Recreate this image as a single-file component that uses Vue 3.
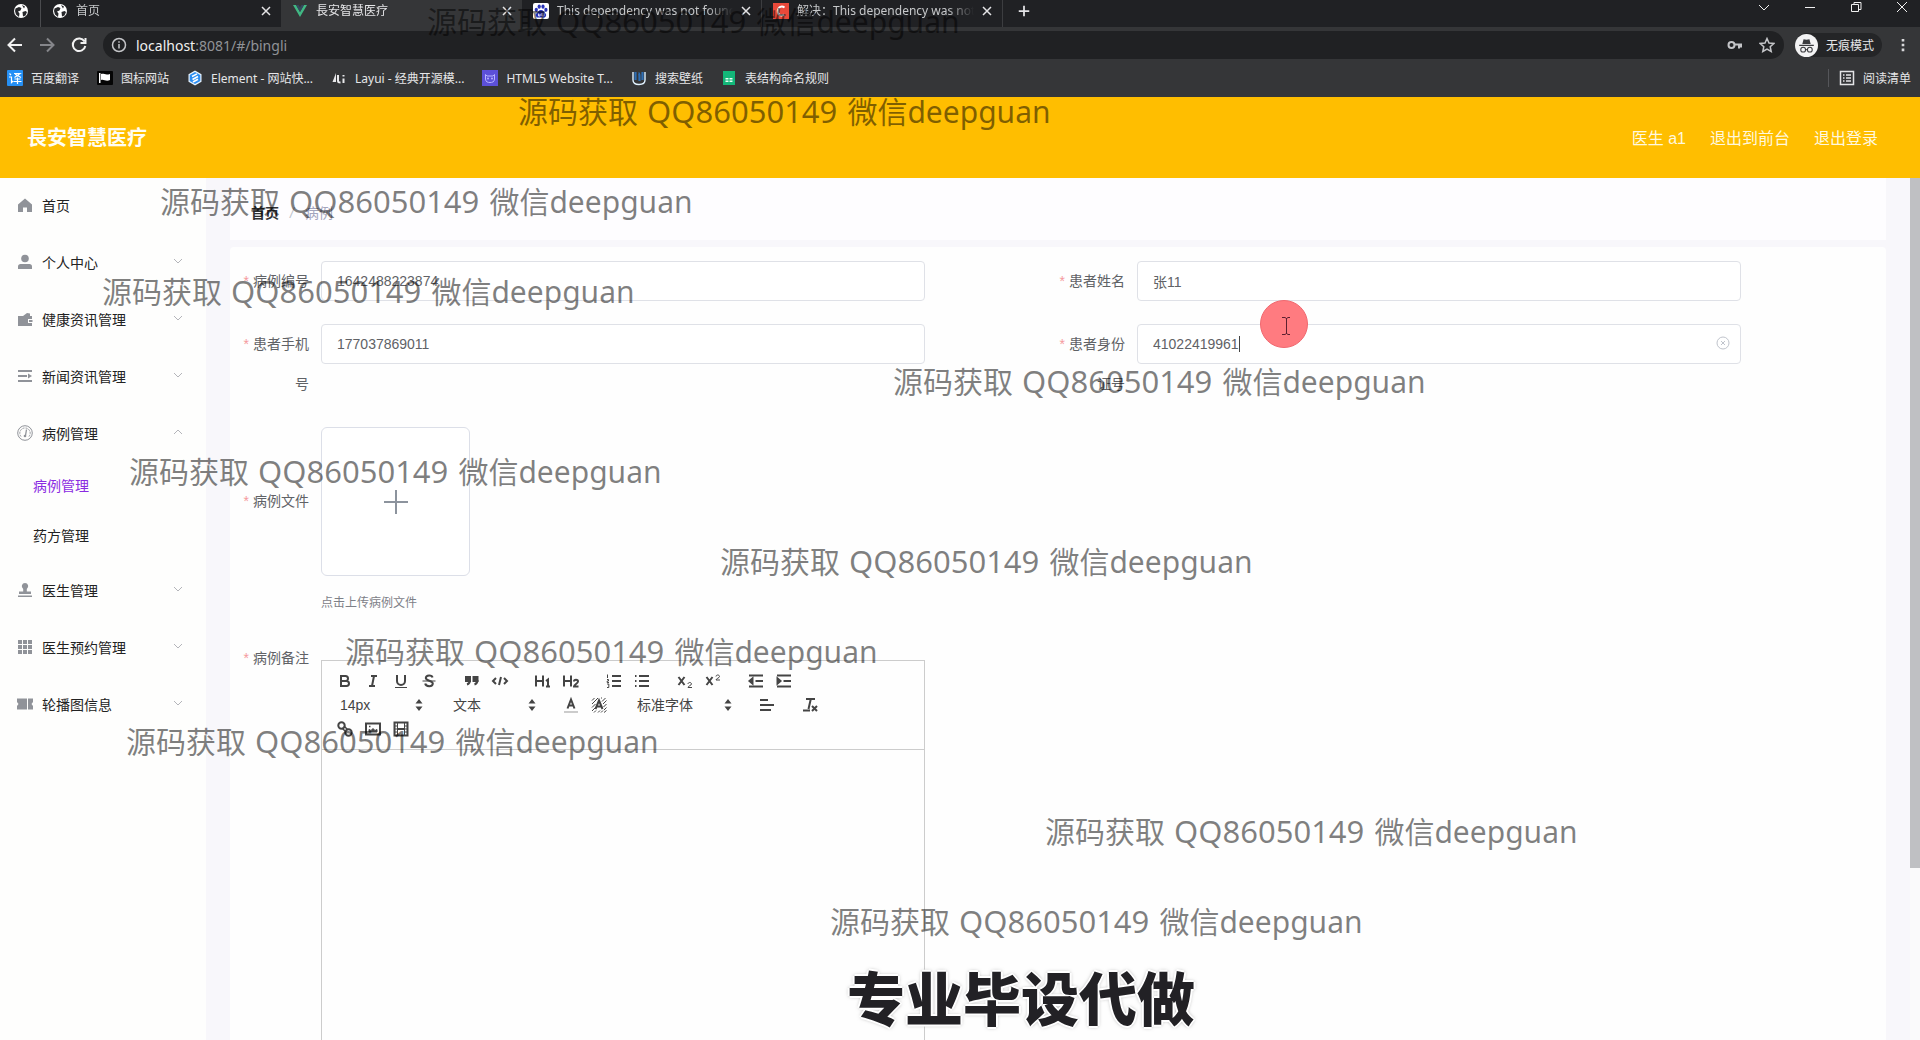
<script setup>
import { ref } from 'vue'

const tabs = [
  { title: '首页', icon: 'globe', width: 240 },
  { title: '長安智慧医疗', icon: 'vue', width: 241, active: true },
  { title: 'This dependency was not found', icon: 'paw', width: 240, line: true },
  { title: '解决：This dependency was not', icon: 'csdn', width: 241, line: true }
]

const bookmarks = [
  { title: '百度翻译', icon: 'translate' },
  { title: '图标网站', icon: 'flag' },
  { title: 'Element - 网站快...', icon: 'element' },
  { title: 'Layui - 经典开源模...', icon: 'layui' },
  { title: 'HTML5 Website T...', icon: 'html5' },
  { title: '搜索壁纸', icon: 'wall' },
  { title: '表结构命名规则', icon: 'sheet' }
]

const menu = [
  { title: '首页', icon: 'home' },
  { title: '个人中心', icon: 'user', arrow: true },
  { title: '健康资讯管理', icon: 'wallet', arrow: true },
  { title: '新闻资讯管理', icon: 'list', arrow: true },
  { title: '病例管理', icon: 'gauge', arrow: true, open: true, children: ['病例管理', '药方管理'] },
  { title: '医生管理', icon: 'stamp', arrow: true },
  { title: '医生预约管理', icon: 'grid', arrow: true },
  { title: '轮播图信息', icon: 'ticket', arrow: true }
]

const form = ref({
  code: '1642488223874',
  name: '张11',
  phone: '177037869011',
  idCard: '41022419961'
})

const inlineTools = [
  ['bold', 'italic', 'underline', 'strike'],
  ['quote', 'code'],
  ['h1', 'h2'],
  ['ol', 'ul'],
  ['sub', 'sup'],
  ['outdent', 'indent']
]

const marks = [
  { x: 427, y: 21 },
  { x: 518, y: 111 },
  { x: 160, y: 201 },
  { x: 102, y: 291 },
  { x: 893, y: 381 },
  { x: 129, y: 471 },
  { x: 720, y: 561 },
  { x: 345, y: 651 },
  { x: 126, y: 741 },
  { x: 1045, y: 831 },
  { x: 830, y: 921 }
]

const icons = {
  globe: '<circle cx="8" cy="8" r="7" fill="#fff"/><path d="M2.500 5.500 6 4l2.500 1-1 2.500L5 8.500l1.500 2L6 14 3 11.500 2 8zM9.500 9l3-1 1.500 1-1.500 3.500-2.500 1zM9 2l3 1.500-1 2z" fill="#26272a"/>',
  vue: '<path d="M1 2h3l4 7 4-7h3L8 14z" fill="#41b883"/><path d="M4 2h2.500L8 4.500 9.500 2H12L8 9z" fill="#35495e"/>',
  paw: '<rect width="16" height="16" rx="2" fill="#fff"/><g fill="#2932b8"><ellipse cx="3.300" cy="6.800" rx="1.600" ry="2.100"/><ellipse cx="6.200" cy="3.600" rx="1.600" ry="2.200"/><ellipse cx="10" cy="3.600" rx="1.600" ry="2.200"/><ellipse cx="12.900" cy="6.800" rx="1.600" ry="2.100"/><path d="M8 7c2.400 0 2.700 2 4.300 3.200 1.700 1.500.7 4.300-1.300 4.300H5c-2 0-3-2.800-1.300-4.300C5.300 9 5.600 7 8 7z"/></g><path d="M5.500 10.500v2.500h1.500v-2M9 10v3h2v-3" fill="none" stroke="#fff" stroke-width=".8"/>',
  csdn: '<rect width="16" height="16" fill="#e8493a"/><path d="M11.500 4.500C9 2.500 5 3.500 4.800 8c-.1 4.600 3.600 5.400 6.400 3.600" fill="none" stroke="#fff" stroke-width="2"/>',
  translate: '<rect width="16" height="16" rx="1" fill="#2590f5"/><path d="M2.500 3.500 4 5M2 7h2.500v5.500L6 11M7 3.500h6L7.500 7.500M8 4l6 3.500M7.500 9h6M6.500 11.500h8M10.500 7.500V14" fill="none" stroke="#fff" stroke-width="1.200"/>',
  flag: '<rect y="1" width="16" height="14" rx="1" fill="#050505"/><path d="M2 3h1.500v10H2zM4 4c3-1 4 1.500 9 0v6c-4 2-6-1-9 0z" fill="#fff"/>',
  element: '<path d="m8 .5 6.500 3.700v7.600L8 15.500l-6.500-3.700V4.200z" fill="#e8f4ff"/><path d="m8 2 5.300 3v6L8 14l-5.300-3V5z" fill="#2b8ef3"/><path d="m5 6.500 5-2.600M5.500 9.500 11 6.500M6 12l5-2.800" stroke="#fff" stroke-width="1.600"/>',
  layui: '<path d="M5 3v9H1.500z" fill="#e8e8ea"/><path d="M7 5v6c0 1.500 1 1.500 2.500 1.500M12.500 8.500V13M12.500 5v1.500" fill="none" stroke="#e8e8ea" stroke-width="2"/>',
  html5: '<rect width="16" height="16" fill="#5c50d8"/><path d="M3.500 4.500 5 6h6l1.500-1.500V9c0 3-2.500 3.500-4.500 3.500S3.500 12 3.500 9z" fill="none" stroke="#b7b4ff"/><circle cx="6" cy="8.500" r="1" fill="#b7b4ff"/><circle cx="10" cy="8.500" r="1" fill="#b7b4ff"/>',
  wall: '<path d="M2 2v8c0 3 2 4.500 6 4.500s6-1.500 6-4.500V2" fill="none" stroke="#dff1ff" stroke-width="1.400"/><path d="M4.500 2v8M7.500 3c1 0 1 2 1 8M11.500 2v8" fill="none" stroke="#2d6eb4" stroke-width="2.200"/>',
  sheet: '<path d="M2 1h12v14H2z" fill="#13b779"/><path d="M4.500 8h3v1.500h-3zM8.500 8h3v1.500h-3zM4.500 10.500h3V12h-3zM8.500 10.500h3V12h-3z" fill="#e9fff6"/>',
  home: '<path d="M8 1.500 1 7.500V15h5v-4.500h4V15h5V7.500z" fill="#909399"/>',
  user: '<circle cx="8" cy="4.500" r="3.800" fill="#909399"/><path d="M1 15v-2.500C1 11 2 10 3.500 10h9c1.500 0 2.500 1 2.500 2.500V15z" fill="#909399"/>',
  wallet: '<path d="M1 5h5l4-3 3 .5V5h2v3h-4v4h4v3H1z" fill="#909399"/><path d="M12 9h3.500v2H12z" fill="#909399"/>',
  list: '<path d="M1 3h14M1 8h9M1 13h14" stroke="#909399" stroke-width="1.800"/><path d="m11 5.500 4 2.500-4 2.500z" fill="#909399"/>',
  gauge: '<circle cx="8" cy="8" r="7.300" fill="none" stroke="#909399"/><path d="M4 11.500A5.200 5.200 0 1 1 12 11.500" fill="none" stroke="#909399" stroke-dasharray="2 1"/><path d="m9.500 4.500-1 6" stroke="#909399" stroke-width="1.300"/><circle cx="8" cy="11" r="1.300" fill="#909399"/>',
  stamp: '<path d="M8 1a3.300 3.300 0 0 1 1.800 6v2.500H14V12H2V9.500h4.200V7A3.300 3.300 0 0 1 8 1zM1 13.500h14V15H1z" fill="#909399"/>',
  grid: '<path d="M1 1h4v4H1zM6 1h4v4H6zM11 1h4v4h-4zM1 6h4v4H1zM6 6h4v4H6zM11 6h4v4h-4zM1 11h4v4H1zM6 11h4v4H6zM11 11h4v4h-4z" fill="#909399"/>',
  ticket: '<path d="M0 2.500h10v11H0V10l1.500-2L0 6zM11 2.500h5V6l-1.500 2L16 10v3.500h-5z" fill="#909399"/>'
}

/* 18 x 18 editor glyphs */
const tools = {
  bold: '<path d="M5 4h4.500a2.500 2.500 0 0 1 0 5H5zM5 9h5.500a2.500 2.500 0 0 1 0 5H5z"/>',
  italic: '<path d="M7 4h6M5 14h6M8 14l2-10"/>',
  underline: '<path d="M5 3v6a4 4 0 0 0 8 0V3"/><path d="M3 15.500h12" stroke-width="1"/>',
  strike: '<path d="M12.500 5.500C12 3 6 2.800 5.800 6c0 3 7 2.500 7 5.500 0 3.500-7 3.500-7.600 0"/><path d="M2.500 9h13" stroke-width="1"/>',
  quote: '<path d="M3 5h4v4H3zM10.500 5h4v4h-4z" fill="#444"/><path d="M7 8c0 3-1.500 4-3 4.500M14.500 8c0 3-1.500 4-3 4.500"/>',
  code: '<path d="m5 6-3 3 3 3M13 6l3 3-3 3M10 5l-2 8"/>',
  h1: '<path d="M2 3.500v11M9 3.500v11M2 9h7M12 9l2-1.500v7M12 14.500h4"/>',
  h2: '<path d="M2 3.500v11M9 3.500v11M2 9h7M12 9.500c0-2.500 4-2.500 4 0 0 2-4 3-4 5h4.500"/>',
  ol: '<path d="M7 4h9M7 9h9M7 14h9"/><path d="M2.500 2.500v3.500M2 7.500h1.500v1.500H2.200V10.500H4M2 12h1.800v3.500H2" stroke-width="1"/>',
  ul: '<path d="M6 4h10M6 9h10M6 14h10M2 4h1.500M2 9h1.500M2 14h1.500"/>',
  sub: '<path d="m2.500 5 6 8M8.500 5l-6 8"/><path d="M12 12c0-2 3.500-2 3.500 0 0 1.300-3.500 2-3.500 3.500h4" stroke-width="1"/>',
  sup: '<path d="m2.500 5 6 8M8.500 5l-6 8"/><path d="M12 4.500c0-2 3.500-2 3.500 0C15.500 6 12 6.500 12 8h4" stroke-width="1"/>',
  outdent: '<path d="M2 3.500h14M8.500 9H16M2 14.500h14"/><path d="M5.500 6.500v5L2.500 9z" fill="#444"/>',
  indent: '<path d="M2 3.500h14M8.500 9H16M2 14.500h14"/><path d="M2.500 6.500v5l3-2.500z" fill="#444"/>',
  color: '<path d="M2 16h14" stroke="#999" stroke-width="1"/><path d="m5.500 12.500 3.500-9 3.500 9M7 9.500h4.500"/>',
  background: '<path d="M2 4.500 4.500 2M2 8l6-6M2 11.500 5.500 8M2 15l4-4M4 16.500l2-2M12 2h-1M12 5.500 15.500 2M13 8l3.500-3.500M13.500 11 16.500 8M14 14l2.500-2.500M14 16.500l2.500-2M8 16.500l2-2M11 16.500l2-2" stroke-width="1"/><path d="M5.500 13 9 4.500l3.500 8.500M7 10.500h4"/>',
  align: '<path d="M2 4h8M2 9h14M2 14h11"/>',
  clean: '<path d="M5 3h9M9.800 3 7.500 13M2 14.500h7M11 10l5 5M16 10l-5 5"/>',
  link: '<circle cx="5.500" cy="5.500" r="3.200"/><circle cx="12.500" cy="12.500" r="3.200"/><path d="m6 8 4 4M8 6l4 4" stroke-width="1.500"/>',
  image: '<path d="M2 3.500h14v11H2z"/><path d="M5 12V9.500l2 1 2-2 2 2 2-1V12z" fill="#444" stroke-width="1"/><path d="M5 6.500h1.500" stroke-width="1.500"/>',
  video: '<path d="M2.500 2.500h13v13h-13zM5.500 9h7"/><path d="M5.500 3v12M12.500 3v12M3 6h2.500M3 9h2.500M3 12h2.500M12.500 6H15M12.500 9H15M12.500 12H15" stroke-width="1"/>'
}
</script>

<template>
  <div class="screen">
    <div class="browser">
      <div class="tabstrip">
        <div class="pinned"><svg class="ic" viewBox="0 0 16 16" v-html="icons.globe"></svg></div>
        <div
          v-for="t in tabs"
          :key="t.title"
          class="tab"
          :class="{ active: t.active, line: t.line }"
          :style="{ width: t.width + 'px' }"
        >
          <svg class="ic" viewBox="0 0 16 16" v-html="icons[t.icon]"></svg>
          <span class="tab-title">{{ t.title }}</span>
          <button class="plain" aria-label="关闭标签">
            <svg class="cross" viewBox="0 0 10 10"><path d="m1 1 8 8M9 1 1 9" /></svg>
          </button>
        </div>
        <button class="plain newtab" aria-label="新标签页">
          <svg class="ic line-ic" viewBox="0 0 16 16"><path d="M8 2v12M2 8h12" /></svg>
        </button>
        <div class="window-buttons">
          <svg viewBox="0 0 12 12"><path d="m1 4 5 5 5-5" /></svg>
          <svg viewBox="0 0 12 12"><path d="M1 6.500h10" /></svg>
          <svg viewBox="0 0 12 12"><path d="M1.500 3.500h7v7h-7zM4 3.500v-2h7v7H8.500" /></svg>
          <svg viewBox="0 0 12 12"><path d="m1 1 10 10M11 1 1 11" /></svg>
        </div>
      </div>
      <div class="toolbar">
        <button class="plain nav-btn" aria-label="后退">
          <svg viewBox="0 0 16 16"><path d="M15 8H2M8 1.500 1.500 8 8 14.500" /></svg>
        </button>
        <button class="plain nav-btn dim" aria-label="前进">
          <svg viewBox="0 0 16 16"><path d="M1 8h13M8 1.500 14.500 8 8 14.500" /></svg>
        </button>
        <button class="plain nav-btn" aria-label="刷新">
          <svg viewBox="0 0 16 16"><path d="M13.500 4.500A6.300 6.300 0 1 0 14.300 9M14.500 1v5h-5" /></svg>
        </button>
        <div class="address">
          <svg class="info" viewBox="0 0 16 16"><circle cx="8" cy="8" r="6.500" /><path d="M8 7v4.500M8 4.200v1.500" /></svg>
          <span class="url">localhost<em>:8081/#/bingli</em></span>
          <svg class="key" viewBox="0 0 16 16"><circle cx="4.500" cy="8" r="3" /><path d="M7.500 7.500H15M12 8v3.500M14 8v2.500" /></svg>
          <svg class="star" viewBox="0 0 16 16"><path d="m8 1.500 2 4.500 4.800.5-3.600 3.200 1 4.800L8 12l-4.200 2.500 1-4.800L1.200 6.500 6 6z" /></svg>
        </div>
        <div class="incognito">
          <svg viewBox="0 0 22 22">
            <circle cx="11" cy="11" r="11" fill="#f3f3f4" />
            <path d="M7 9.500 8.200 5l2.800.6L13.800 5 15 9.500zM4 10.200h14v1.300H4z" fill="#3a3b3e" />
            <path d="M10.300 15h1.400" stroke="#3a3b3e" />
            <circle cx="7.800" cy="15" r="2.300" fill="none" stroke="#3a3b3e" />
            <circle cx="14.200" cy="15" r="2.300" fill="none" stroke="#3a3b3e" />
          </svg>
          <span>无痕模式</span>
        </div>
        <svg class="dots" viewBox="0 0 4 16"><path d="M.5 1h3v3h-3zM.5 6.500h3v3h-3zM.5 12h3v3h-3z" /></svg>
      </div>
      <div class="bookmarks">
        <a v-for="b in bookmarks" :key="b.title" href="#">
          <svg class="ic" viewBox="0 0 16 16" v-html="icons[b.icon]"></svg>{{ b.title }}
        </a>
        <a class="reading" href="#">
          <svg class="ic line-ic" viewBox="0 0 16 16"><path d="M1.500 1.500h13v13h-13zM4 5h1.500M4 8h1.500M4 11h1.500M7 5h5M7 8h5M7 11h5" /></svg>阅读清单
        </a>
      </div>
    </div>

    <header class="banner">
      <h1>長安智慧医疗</h1>
      <nav>
        <span>医生 a1</span>
        <a href="#">退出到前台</a>
        <a href="#">退出登录</a>
      </nav>
    </header>

    <div class="body">
      <aside>
        <template v-for="m in menu" :key="m.title">
          <a class="item" href="#">
            <svg class="ic" viewBox="0 0 16 16" v-html="icons[m.icon]"></svg>
            <span>{{ m.title }}</span>
            <svg v-if="m.arrow" class="arrow" :class="{ open: m.open }" viewBox="0 0 10 6"><path d="m1 1 4 4 4-4" /></svg>
          </a>
          <a
            v-for="(c, i) in m.children"
            :key="c"
            class="subitem"
            :class="{ current: i === 0 }"
            href="#"
          >{{ c }}</a>
        </template>
      </aside>

      <main>
        <div class="crumbs"><a href="#">首页</a><i>/</i><span>病例</span></div>
        <form class="card" @submit.prevent>
          <div class="row">
            <div class="field">
              <label for="code">病例编号</label>
              <div class="control"><input id="code" v-model="form.code" type="text" /></div>
            </div>
            <div class="field">
              <label for="name">患者姓名</label>
              <div class="control"><input id="name" v-model="form.name" type="text" /></div>
            </div>
          </div>
          <div class="row">
            <div class="field">
              <label for="phone">患者手机号</label>
              <div class="control"><input id="phone" v-model="form.phone" type="text" /></div>
            </div>
            <div class="field">
              <label for="idcard">患者身份证号</label>
              <div class="control">
                <input id="idcard" v-model="form.idCard" type="text" />
                <span class="caret"></span>
                <svg class="clear" viewBox="0 0 16 16"><circle cx="8" cy="8" r="6" /><path d="m6 6 4 4M10 6l-4 4" /></svg>
                <svg class="pointer" viewBox="0 0 48 48">
                  <circle cx="24" cy="24" r="23.500" fill="#ff7b80" stroke="#f0686f" />
                  <path d="M22 17.500h3l1.500 1 1.500-1h2M26.500 18v16M22 34.500h3l1.500-1 1.500 1h2" fill="none" stroke="#5c2030" />
                </svg>
              </div>
            </div>
          </div>
          <div class="row">
            <div class="field">
              <label class="tall" for="file">病例文件</label>
              <div class="control">
                <button id="file" type="button" class="upload" aria-label="上传">
                  <svg viewBox="0 0 24 24"><path d="M12 0v24M0 12h24" /></svg>
                </button>
                <p class="tip">点击上传病例文件</p>
              </div>
            </div>
          </div>
          <div class="row">
            <div class="field">
              <label for="note">病例备注</label>
              <div class="control">
                <div class="editor">
                  <div class="tools">
                    <div class="tool-row">
                      <div v-for="(g, i) in inlineTools" :key="i" class="group">
                        <button v-for="n in g" :key="n" type="button" :aria-label="n">
                          <svg viewBox="0 0 18 18" v-html="tools[n]"></svg>
                        </button>
                      </div>
                    </div>
                    <div class="tool-row">
                      <div class="picker">
                        <select aria-label="字号"><option>14px</option></select>
                        <svg viewBox="0 0 8 12"><path d="m4 0 3.500 4.500h-7zM4 12l3.500-4.500h-7z" /></svg>
                      </div>
                      <div class="picker">
                        <select aria-label="标题"><option>文本</option></select>
                        <svg viewBox="0 0 8 12"><path d="m4 0 3.500 4.500h-7zM4 12l3.500-4.500h-7z" /></svg>
                      </div>
                      <div class="group">
                        <button type="button" aria-label="字体颜色"><svg viewBox="0 0 18 18" v-html="tools.color"></svg></button>
                        <button type="button" aria-label="背景颜色"><svg viewBox="0 0 18 18" v-html="tools.background"></svg></button>
                      </div>
                      <div class="picker wide">
                        <select aria-label="字体"><option>标准字体</option></select>
                        <svg viewBox="0 0 8 12"><path d="m4 0 3.500 4.500h-7zM4 12l3.500-4.500h-7z" /></svg>
                      </div>
                      <div class="group">
                        <button type="button" aria-label="对齐"><svg viewBox="0 0 18 18" v-html="tools.align"></svg></button>
                      </div>
                      <div class="group">
                        <button type="button" aria-label="清除格式"><svg viewBox="0 0 18 18" v-html="tools.clean"></svg></button>
                      </div>
                    </div>
                    <div class="tool-row">
                      <div class="group">
                        <button v-for="n in ['link', 'image', 'video']" :key="n" type="button" :aria-label="n">
                          <svg viewBox="0 0 18 18" v-html="tools[n]"></svg>
                        </button>
                      </div>
                    </div>
                  </div>
                  <textarea id="note"></textarea>
                </div>
              </div>
            </div>
          </div>
        </form>
      </main>
      <div class="scroll"><div class="thumb"></div></div>
    </div>

    <div class="overlay">
      <span v-for="m in marks" :key="m.y" class="mark" :style="{ left: m.x + 'px', top: m.y + 'px' }">源码获取<span class="num"> QQ86050149 </span>微信deepguan</span>
      <p class="caption">专业毕设代做</p>
    </div>
  </div>
</template>

<style>
html,
body {
  overflow: hidden;
}
</style>

<style scoped>
.screen {
  position: relative;
  display: flex;
  flex-direction: column;
  height: 100vh;
  overflow: hidden;
  background: #fff;
  font-family: "Liberation Sans", "Noto Sans CJK SC", sans-serif;
  font-size: 14px;
}
* {
  box-sizing: border-box;
}
a {
  color: inherit;
  text-decoration: none;
}
svg {
  display: block;
  flex: none;
}
.ic {
  width: 16px;
  height: 16px;
}
.line-ic {
  fill: none;
  stroke: #e4e4e6;
  stroke-width: 2;
}
.plain {
  padding: 0;
  border: 0;
  background: none;
}

/* browser frame */
.browser {
  flex: none;
  background: #353638;
  color: #e6e6e8;
  font: 12px "Noto Sans", "Noto Sans CJK SC", sans-serif;
}
.tabstrip {
  display: flex;
  height: 27px;
  background: #202124;
}
.pinned {
  width: 41px;
  padding: 3px 0 0 13px;
  border-right: 1px solid #4a4b4e;
}
.tab {
  display: flex;
  align-items: center;
  flex: none;
  height: 27px;
  padding: 0 10px 5px 11px;
  color: #c6c8ca;
}
.tab.active {
  background: #353638;
  color: #e6e6e8;
}
.tab.line {
  border-right: 1px solid #3c3d40;
}
.tab-title {
  flex: 1;
  height: 20px;
  margin: 0 8px;
  overflow: hidden;
  white-space: nowrap;
  line-height: 20px;
  mask-image: linear-gradient(90deg, #000 85%, transparent);
}
.cross {
  width: 10px;
  height: 10px;
  fill: none;
  stroke: #e4e4e6;
  stroke-width: 1.5;
}
.newtab {
  width: 42px;
  padding: 0 14px 5px;
}
.newtab .ic {
  width: 14px;
}
.window-buttons {
  display: flex;
  gap: 34px;
  margin-left: auto;
  padding: 1px 12px 0 0;
}
.window-buttons svg {
  width: 12px;
  height: 12px;
  fill: none;
  stroke: #f0f0f0;
}
.toolbar {
  display: flex;
  align-items: center;
  height: 36px;
}
.nav-btn {
  width: 32px;
}
.nav-btn svg {
  width: 16px;
  height: 16px;
  margin-left: 7px;
  fill: none;
  stroke: #f2f2f2;
  stroke-width: 2;
}
.nav-btn.dim svg {
  stroke: #85868a;
}
.address {
  display: flex;
  align-items: center;
  flex: 1;
  height: 28px;
  margin: 0 11px 0 7px;
  padding: 0 9px 0 8px;
  border-radius: 14px;
  background: #202123;
}
.address svg {
  width: 16px;
  height: 16px;
  fill: none;
  stroke: #c4c5c8;
  stroke-width: 1.5;
}
.address .key {
  stroke-width: 2;
}
.address .star {
  margin-left: 16px;
}
.url {
  flex: 1;
  margin-left: 9px;
  color: #f0f0f0;
  font-size: 14px;
}
.url em {
  color: #919397;
  font-style: normal;
}
.incognito {
  display: flex;
  align-items: center;
  gap: 8px;
  height: 24px;
  padding-right: 8px;
  border-radius: 12px;
  background: #242527;
}
.incognito svg {
  width: 23px;
  height: 23px;
}
.dots {
  width: 4px;
  height: 14px;
  margin: 0 15px 0 19px;
  fill: #d8d8da;
}
.bookmarks {
  display: flex;
  align-items: center;
  gap: 18px;
  height: 34px;
  padding: 0 9px 4px 7px;
}
.bookmarks a {
  display: flex;
  align-items: center;
  gap: 8px;
  white-space: nowrap;
}
.bookmarks .reading {
  margin-left: auto;
  padding-left: 10px;
  border-left: 1px solid #55565a;
}
.reading .ic {
  stroke-width: 1.5;
}

/* application header */
.banner {
  display: flex;
  align-items: center;
  justify-content: space-between;
  flex: none;
  height: 81px;
  padding: 0 42px 2px 27px;
  background: #ffbe00;
  color: #fff8df;
}
.banner h1 {
  margin: 0;
  color: #fffdf2;
  font-size: 20px;
  font-weight: 700;
}
.banner nav {
  display: flex;
  gap: 24px;
  font-size: 16px;
}

.body {
  display: flex;
  flex: 1;
  min-height: 0;
}
aside {
  flex: none;
  width: 206px;
  background: #fefefd;
  color: #222;
}
.item {
  display: flex;
  align-items: center;
  height: 57px;
  padding: 0 23px 4px 17px;
}
.item span {
  flex: 1;
  margin-left: 9px;
}
.item .arrow {
  width: 10px;
  height: 6px;
  margin-bottom: 2px;
  fill: none;
  stroke: #b4b5ba;
}
.arrow.open {
  transform: rotate(180deg);
}
.subitem {
  display: flex;
  align-items: center;
  height: 50px;
  padding: 0 0 6px 33px;
}
.subitem.current {
  color: #8a2be2;
}

main {
  flex: 1;
  padding: 0 24px;
  overflow: hidden;
  background: #f8f7fb;
}
.crumbs {
  display: flex;
  gap: 9px;
  height: 62px;
  padding-left: 21px;
  background: #fefdff;
  color: #a3a5bd;
  line-height: 70px;
}
.crumbs a {
  color: #303133;
  font-weight: 700;
}
.crumbs i {
  width: 6px;
  margin-left: 2px;
  color: #c0c4cc;
}
.card {
  margin-top: 7px;
  padding: 14px 13px 0 11px;
  border-radius: 4px;
  background: #fefefe;
}
.row {
  display: flex;
  margin-bottom: 23px;
}
.field {
  display: flex;
  flex: 0 0 50%;
}
label {
  flex: none;
  width: 80px;
  padding-right: 12px;
  color: #606266;
  line-height: 40px;
  text-align: right;
}
label::before {
  content: "*";
  margin-right: 4px;
  color: #f59a9d;
}
label.tall {
  line-height: 149px;
}
.control {
  position: relative;
  width: 74%;
}
input {
  display: block;
  width: 100%;
  height: 40px;
  padding: 0 15px;
  border: 1px solid #dfe1e7;
  border-radius: 4px;
  outline: 0;
  background: #fff;
  color: #606266;
  font: inherit;
}
.caret {
  position: absolute;
  top: 12px;
  left: 102px;
  width: 1px;
  height: 16px;
  background: #444;
}
.clear {
  position: absolute;
  top: 11px;
  right: 10px;
  width: 16px;
  height: 16px;
  fill: none;
  stroke: #c0c4cc;
}
.pointer {
  position: absolute;
  top: -24px;
  left: 123px;
  width: 48px;
  height: 48px;
}
.upload {
  display: flex;
  align-items: center;
  justify-content: center;
  width: 149px;
  height: 149px;
  padding: 0;
  border: 1px solid #dcdfe8;
  border-radius: 6px;
  background: #fff;
}
.upload svg {
  width: 24px;
  height: 24px;
  fill: none;
  stroke: #8c939d;
  stroke-width: 2;
}
.tip {
  height: 24px;
  margin: 15px 0 0;
  color: #7d8087;
  font-size: 12px;
  line-height: 24px;
}
.editor {
  margin-top: 22px;
  border: 1px solid #ccc;
}
.tools {
  padding: 8px 9px;
  border-bottom: 1px solid #ccc;
}
.tool-row {
  display: flex;
  gap: 15px;
  height: 24px;
}
.group {
  display: flex;
}
.group button {
  width: 28px;
  height: 24px;
  padding: 3px 5px;
  border: 0;
  background: none;
}
.group svg {
  width: 18px;
  height: 18px;
  fill: none;
  stroke: #444;
  stroke-width: 2;
}
.picker {
  position: relative;
  width: 98px;
}
.picker.wide {
  width: 110px;
}
.picker select {
  width: 100%;
  height: 24px;
  padding: 0 9px;
  border: 0;
  appearance: none;
  background: none;
  color: #444;
  font: inherit;
}
.picker svg {
  position: absolute;
  top: 6px;
  right: 6px;
  width: 8px;
  height: 12px;
  fill: #444;
}
textarea {
  display: block;
  width: 100%;
  height: 400px;
  border: 0;
  outline: 0;
  resize: none;
  background: none;
}
.scroll {
  flex: none;
  width: 10px;
  background: #fafafb;
}
.thumb {
  height: 80%;
  background: #bfc0c3;
}

/* text laid over the whole picture */
.overlay {
  position: absolute;
  inset: 0;
  overflow: hidden;
  pointer-events: none;
}
.mark {
  position: absolute;
  height: 40px;
  margin-top: -20px;
  color: rgba(0, 0, 0, 0.5);
  font: 30px/40px "Noto Sans", "Noto Sans CJK SC", sans-serif;
  white-space: nowrap;
}
.num {
  margin: 0 2px 0 1px;
  font-size: 31px;
}
.caption {
  position: absolute;
  top: 960px;
  left: 847px;
  margin: 0;
  color: #222125;
  font: 900 58px/72px "Noto Sans CJK SC", sans-serif;
  text-shadow: 2px 0 #fff, -2px 0 #fff, 0 2px #fff, 0 -2px #fff, 0 0 4px #777;
  white-space: nowrap;
}
</style>
